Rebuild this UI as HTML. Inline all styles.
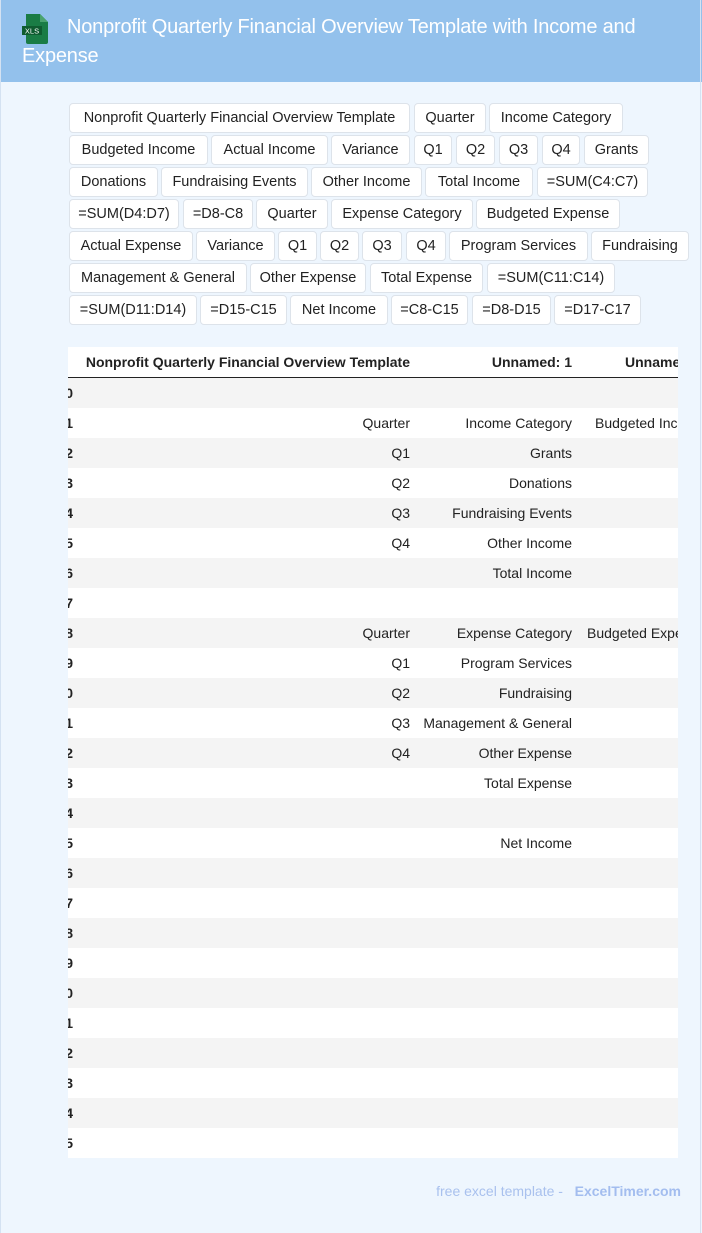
<!DOCTYPE html>
<html><head><meta charset="utf-8"><style>
*{margin:0;padding:0;box-sizing:border-box}
body{width:702px;height:1233px;background:#eef6fe;font-family:"Liberation Sans",sans-serif;position:relative;overflow:hidden}
.bl{position:absolute;left:0;top:0;width:1px;height:1233px;background:#d4e2f2}
.br{position:absolute;right:1px;top:0;width:1px;height:1233px;background:#d4e2f2}
.hdr{position:absolute;left:0;top:0;width:702px;height:82px;background:#93c1ec}
.title{position:absolute;left:22px;top:13px;width:670px;color:#fff;font-size:20px;line-height:29px;text-indent:45px;letter-spacing:-0.2px}
.chip{position:absolute;height:30px;border:1px solid #dde3ea;border-radius:4px;background:#fff;font-size:14.5px;color:#222;display:flex;align-items:center;justify-content:center;white-space:nowrap;overflow:hidden}
.tbl{position:absolute;left:68px;top:347px;width:610px;height:811px;overflow:hidden;background:#fff}
.row{position:absolute;left:0;width:610px;height:30px;font-size:14px;color:#222}
.row span{position:absolute;top:7px;white-space:nowrap}
.g{background:#f4f4f4}
.foot{position:absolute;right:21px;top:1183px;font-size:14px;color:#a9c1ee}
</style></head><body>
<div class="hdr">
<svg style="position:absolute;left:20px;top:13px" width="32" height="32" viewBox="0 0 32 32">
<path d="M6 1h14l8 8v20a2 2 0 0 1-2 2H8a2 2 0 0 1-2-2z" fill="#1a7c45"/>
<path d="M20 1v8h8z" fill="#4aa36e"/>
<rect x="2" y="13" width="20" height="9" fill="#0f5c30"/>
<text x="12" y="20.5" font-size="7.5" fill="#fff" text-anchor="middle" font-family="Liberation Sans">XLS</text>
</svg>
<div class="title">Nonprofit Quarterly Financial Overview Template with Income and Expense</div>
</div>
<div class="bl"></div><div class="br"></div>

<div class="chip" style="left:69px;top:103px;width:341px">Nonprofit Quarterly Financial Overview Template</div>
<div class="chip" style="left:414px;top:103px;width:72px">Quarter</div>
<div class="chip" style="left:489px;top:103px;width:134px">Income Category</div>

<div class="chip" style="left:69px;top:135px;width:139px">Budgeted Income</div>
<div class="chip" style="left:211px;top:135px;width:117px">Actual Income</div>
<div class="chip" style="left:331px;top:135px;width:79px">Variance</div>
<div class="chip" style="left:414px;top:135px;width:38px">Q1</div>
<div class="chip" style="left:456px;top:135px;width:39px">Q2</div>
<div class="chip" style="left:499px;top:135px;width:39px">Q3</div>
<div class="chip" style="left:542px;top:135px;width:38px">Q4</div>
<div class="chip" style="left:584px;top:135px;width:65px">Grants</div>

<div class="chip" style="left:69px;top:167px;width:89px">Donations</div>
<div class="chip" style="left:161px;top:167px;width:147px">Fundraising Events</div>
<div class="chip" style="left:311px;top:167px;width:111px">Other Income</div>
<div class="chip" style="left:425px;top:167px;width:108px">Total Income</div>
<div class="chip" style="left:537px;top:167px;width:111px">=SUM(C4:C7)</div>

<div class="chip" style="left:69px;top:199px;width:110px">=SUM(D4:D7)</div>
<div class="chip" style="left:183px;top:199px;width:70px">=D8-C8</div>
<div class="chip" style="left:256px;top:199px;width:72px">Quarter</div>
<div class="chip" style="left:331px;top:199px;width:142px">Expense Category</div>
<div class="chip" style="left:476px;top:199px;width:144px">Budgeted Expense</div>

<div class="chip" style="left:69px;top:231px;width:124px">Actual Expense</div>
<div class="chip" style="left:196px;top:231px;width:79px">Variance</div>
<div class="chip" style="left:278px;top:231px;width:39px">Q1</div>
<div class="chip" style="left:320px;top:231px;width:39px">Q2</div>
<div class="chip" style="left:362px;top:231px;width:40px">Q3</div>
<div class="chip" style="left:406px;top:231px;width:40px">Q4</div>
<div class="chip" style="left:449px;top:231px;width:139px">Program Services</div>
<div class="chip" style="left:591px;top:231px;width:98px">Fundraising</div>

<div class="chip" style="left:69px;top:263px;width:178px">Management &amp; General</div>
<div class="chip" style="left:250px;top:263px;width:116px">Other Expense</div>
<div class="chip" style="left:370px;top:263px;width:113px">Total Expense</div>
<div class="chip" style="left:487px;top:263px;width:128px">=SUM(C11:C14)</div>

<div class="chip" style="left:69px;top:295px;width:128px">=SUM(D11:D14)</div>
<div class="chip" style="left:200px;top:295px;width:87px">=D15-C15</div>
<div class="chip" style="left:290px;top:295px;width:98px">Net Income</div>
<div class="chip" style="left:391px;top:295px;width:77px">=C8-C15</div>
<div class="chip" style="left:472px;top:295px;width:79px">=D8-D15</div>
<div class="chip" style="left:554px;top:295px;width:87px">=D17-C17</div>

<div class="tbl">
<div class="row" style="top:0;height:31px;border-bottom:1px solid #222;font-weight:bold">
<span style="right:268px">Nonprofit Quarterly Financial Overview Template</span>
<span style="right:106px">Unnamed: 1</span>
<span style="left:557px">Unnamed: 2</span>
</div>
<div class="row g" style="top:31px"><span style="right:605px;font-weight:bold">0</span></div>
<div class="row" style="top:61px"><span style="right:605px;font-weight:bold">1</span><span style="right:268px">Quarter</span><span style="right:106px">Income Category</span><span style="left:527px">Budgeted Income</span></div>
<div class="row g" style="top:91px"><span style="right:605px;font-weight:bold">2</span><span style="right:268px">Q1</span><span style="right:106px">Grants</span></div>
<div class="row" style="top:121px"><span style="right:605px;font-weight:bold">3</span><span style="right:268px">Q2</span><span style="right:106px">Donations</span></div>
<div class="row g" style="top:151px"><span style="right:605px;font-weight:bold">4</span><span style="right:268px">Q3</span><span style="right:106px">Fundraising Events</span></div>
<div class="row" style="top:181px"><span style="right:605px;font-weight:bold">5</span><span style="right:268px">Q4</span><span style="right:106px">Other Income</span></div>
<div class="row g" style="top:211px"><span style="right:605px;font-weight:bold">6</span><span style="right:106px">Total Income</span></div>
<div class="row" style="top:241px"><span style="right:605px;font-weight:bold">7</span></div>
<div class="row g" style="top:271px"><span style="right:605px;font-weight:bold">8</span><span style="right:268px">Quarter</span><span style="right:106px">Expense Category</span><span style="left:519px">Budgeted Expense</span></div>
<div class="row" style="top:301px"><span style="right:605px;font-weight:bold">9</span><span style="right:268px">Q1</span><span style="right:106px">Program Services</span></div>
<div class="row g" style="top:331px"><span style="right:605px;font-weight:bold">10</span><span style="right:268px">Q2</span><span style="right:106px">Fundraising</span></div>
<div class="row" style="top:361px"><span style="right:605px;font-weight:bold">11</span><span style="right:268px">Q3</span><span style="right:106px">Management &amp; General</span></div>
<div class="row g" style="top:391px"><span style="right:605px;font-weight:bold">12</span><span style="right:268px">Q4</span><span style="right:106px">Other Expense</span></div>
<div class="row" style="top:421px"><span style="right:605px;font-weight:bold">13</span><span style="right:106px">Total Expense</span></div>
<div class="row g" style="top:451px"><span style="right:605px;font-weight:bold">14</span></div>
<div class="row" style="top:481px"><span style="right:605px;font-weight:bold">15</span><span style="right:106px">Net Income</span></div>
<div class="row g" style="top:511px"><span style="right:605px;font-weight:bold">16</span></div>
<div class="row" style="top:541px"><span style="right:605px;font-weight:bold">17</span></div>
<div class="row g" style="top:571px"><span style="right:605px;font-weight:bold">18</span></div>
<div class="row" style="top:601px"><span style="right:605px;font-weight:bold">19</span></div>
<div class="row g" style="top:631px"><span style="right:605px;font-weight:bold">20</span></div>
<div class="row" style="top:661px"><span style="right:605px;font-weight:bold">21</span></div>
<div class="row g" style="top:691px"><span style="right:605px;font-weight:bold">22</span></div>
<div class="row" style="top:721px"><span style="right:605px;font-weight:bold">23</span></div>
<div class="row g" style="top:751px"><span style="right:605px;font-weight:bold">24</span></div>
<div class="row" style="top:781px"><span style="right:605px;font-weight:bold">25</span></div>
</div>

<div class="foot">free excel template - &nbsp;&nbsp;<b style="color:#a3bdef">ExcelTimer.com</b></div>
</body></html>
